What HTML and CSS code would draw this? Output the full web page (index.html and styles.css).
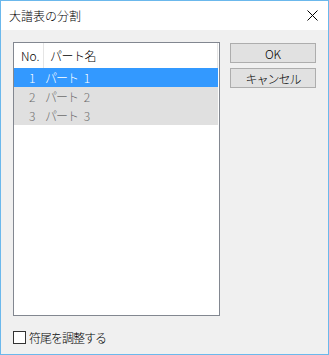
FILE: index.html
```html
<!DOCTYPE html>
<html lang="ja">
<head>
    <meta charset="UTF-8">
    <title>大譜表の分割</title>
    <link rel="stylesheet" href="styles.css">
</head>
<body>
    <div class="dialog">
        <div class="titlebar">
            <span class="title">大譜表の分割</span>
            <svg class="close" width="11" height="11" viewBox="0 0 11 11">
                <path d="M0.5 0.5 L10.5 10.5 M10.5 0.5 L0.5 10.5" stroke="#000" stroke-width="1" fill="none"/>
            </svg>
        </div>
        <div class="content">
            <div class="top">
                <div class="listbox">
                    <div class="list-header">
                        <div class="col-no">No.</div>
                        <div class="col-name">パート名</div>
                    </div>
                    <div class="row selected">
                        <div class="col-no">1</div>
                        <div class="col-name"><span class="part">パート</span> 1</div>
                    </div>
                    <div class="row">
                        <div class="col-no">2</div>
                        <div class="col-name"><span class="part">パート</span> 2</div>
                    </div>
                    <div class="row">
                        <div class="col-no">3</div>
                        <div class="col-name"><span class="part">パート</span> 3</div>
                    </div>
                </div>
                <div class="buttons">
                    <button class="btn">OK</button>
                    <button class="btn kana">キャンセル</button>
                </div>
            </div>
            <label class="check">
                <span class="box"></span>
                <span class="check-label">符尾を調整する</span>
            </label>
        </div>
    </div>
</body>
</html>
```

FILE: styles.css
```css
body {
    margin: 0;
    font-family: "Noto Sans CJK JP", "Liberation Sans", sans-serif;
    font-size: 12px;
    font-weight: 300;
    color: #000;
}
.dialog {
    width: 329px;
    height: 355px;
    box-sizing: border-box;
    border: 1px solid #6bb8ec;
    background-color: #f0f0f0;
    display: flex;
    flex-direction: column;
}
.titlebar {
    height: 29px;
    background-color: #fff;
    display: flex;
    align-items: center;
    justify-content: space-between;
    padding: 0 10px 0 8px;
}
.title {
    font-size: 12px;
    line-height: 1;
}
.close {
    display: block;
}
.content {
    padding: 12px 12px 0 12px;
}
.top {
    display: flex;
}
.listbox {
    width: 207px;
    height: 274px;
    box-sizing: border-box;
    border: 1px solid #828790;
    background-color: #fff;
    padding-right: 1px;
}
.list-header {
    display: flex;
    height: 25px;
    border-right: 1px solid #e5e5e5;
}
.list-header div {
    display: flex;
    align-items: center;
}
.list-header .col-no {
    width: 30px;
    padding-left: 7px;
    box-sizing: border-box;
    border-right: 1px solid #e5e5e5;
}
.list-header .col-name {
    padding-left: 6px;
    letter-spacing: -0.5px;
}
.row {
    display: flex;
    height: 19px;
    align-items: center;
    background-color: #e0e0e0;
    color: #6d6d6d;
}
.row.selected {
    background-color: #3399ff;
    color: #fff;
}
.row .col-no {
    width: 31px;
    padding-left: 15px;
    box-sizing: border-box;
}
.part {
    letter-spacing: -1px;
    margin-right: 3px;
}
.kana {
    letter-spacing: -1px;
}
.buttons {
    display: flex;
    flex-direction: column;
    gap: 5px;
    margin-left: 10px;
    margin-top: 1px;
}
.btn {
    width: 86px;
    height: 20px;
    box-sizing: border-box;
    border: 1px solid #adadad;
    background-color: #e1e1e1;
    font-family: inherit;
    font-size: 12px;
    font-weight: 300;
    padding: 0;
    color: #000;
}
.check {
    display: flex;
    align-items: center;
    margin-top: 13px;
    gap: 3px;
}
.box {
    width: 13px;
    height: 13px;
    box-sizing: border-box;
    border: 1px solid #333;
    background-color: #fff;
}
.check-label {
    letter-spacing: -1px;
}
```
